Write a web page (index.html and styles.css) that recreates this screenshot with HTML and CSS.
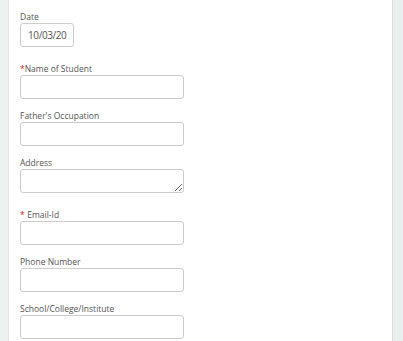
FILE: index.html
```html
<!DOCTYPE html>
<html>
<head>
<meta charset="utf-8">
<link rel="stylesheet" href="styles.css">
</head>
<body>
<div class="page">
  <div class="gutter gutter-left"></div>
  <form class="panel">
    <div class="field field-date">
      <label class="label">Date</label>
      <input class="input input-date" type="text" value="10/03/20">
    </div>
    <div class="field">
      <label class="label"><span class="req">*</span>Name of Student</label>
      <input class="input" type="text">
    </div>
    <div class="field">
      <label class="label">Father's Occupation</label>
      <input class="input" type="text">
    </div>
    <div class="field field-area">
      <label class="label">Address</label>
      <textarea class="input textarea"></textarea>
    </div>
    <div class="field">
      <label class="label"><span class="req req-spaced">*</span>Email-Id</label>
      <input class="input" type="text">
    </div>
    <div class="field">
      <label class="label">Phone Number</label>
      <input class="input" type="text">
    </div>
    <div class="field">
      <label class="label">School/College/Institute</label>
      <input class="input" type="text">
    </div>
  </form>
  <div class="gutter gutter-right"></div>
</div>
</body>
</html>
```
FILE: styles.css
```css
html, body {
  margin: 0;
  padding: 0;
  height: 100%;
  overflow: hidden;
  background: #ebefef;
  font-family: "Open Sans", "Liberation Sans", sans-serif;
}
.page {
  display: flex;
  height: 341px;
}
.gutter-left {
  width: 8px;
  flex: none;
  background: #edf1f1;
  border-right: 1px solid #e0e6e6;
}
.gutter-right {
  width: 10px;
  flex: none;
  background: #e9eeee;
  border-left: 1px solid #d6dede;
}
.panel {
  flex: 1;
  background: #ffffff;
  padding: 10px 0 0 11px;
  margin: 0;
  display: flex;
  flex-direction: column;
}
.field {
  display: flex;
  flex-direction: column;
  align-items: flex-start;
  margin-bottom: 10px;
}
.field-date,
.field-area {
  margin-bottom: 15px;
}
.label {
  display: block;
  font-size: 8.5px;
  line-height: 13px;
  color: #555;
  height: 13px;
}
.req {
  color: #e0201c;
}
.req-spaced {
  margin-right: 2.5px;
}
.input {
  box-sizing: border-box;
  width: 164px;
  height: 24px;
  margin: 0;
  border: 1px solid #cccccc;
  border-radius: 3px;
  background: #fff;
  font-family: "Open Sans", "Liberation Sans", sans-serif;
  outline: none;
}
.input-date {
  width: 54px;
  padding: 0 0 0 7px;
  font-size: 10px;
  letter-spacing: -0.4px;
  color: #555;
}
.textarea {
  display: block;
  resize: vertical;
  padding: 2px 4px;
}
```
